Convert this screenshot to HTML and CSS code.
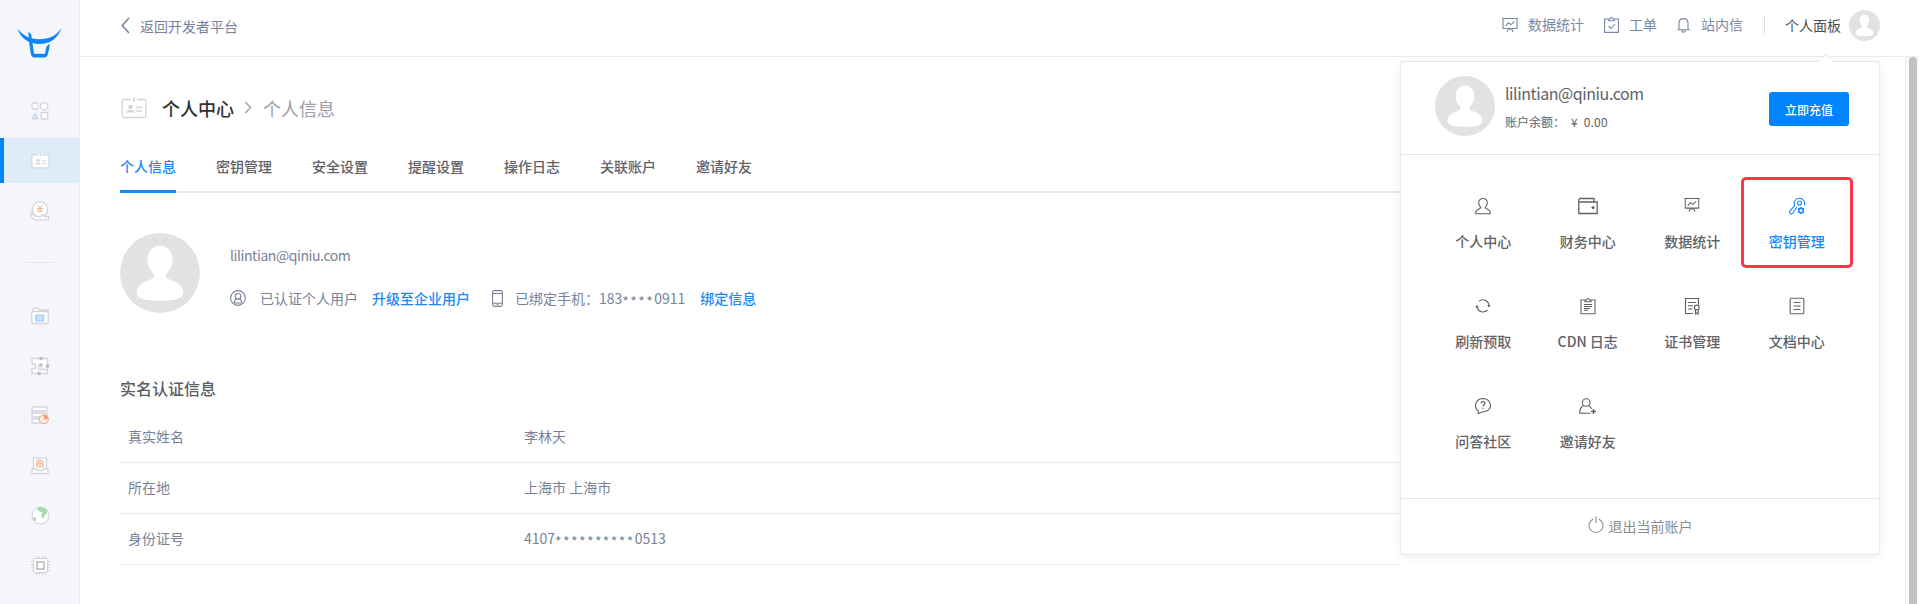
FILE: index.html
```html
<!DOCTYPE html>
<html lang="zh-CN">
<head>
<meta charset="utf-8">
<title>个人中心</title>
<link rel="stylesheet" href="styles.css">
</head>
<body>
<svg class="defs" width="0" height="0">
  <symbol id="avatar" viewBox="0 0 80 80">
    <circle cx="40" cy="40" r="40" fill="#e2e2e2"/>
    <path fill="#fff" d="M40 12.500C47 12.500 52.500 18 52.500 27C52.500 34 49 37.500 46.500 41C45 43.500 46.500 45 49 46.200C56 48.500 63.500 52.500 63.300 59.500C63 67 52 67.500 40 67.500C28 67.500 17 67 16.700 59.500C16.500 52.500 24 48.500 31 46.200C33.500 45 35 43.500 33.500 41C31 37.500 27.500 34 27.500 27C27.500 18 33 12.500 40 12.500Z"/>
  </symbol>
  <symbol id="board" viewBox="0 0 16 16">
    <path d="M0 1.500H16M1 1.500V11.500H15V1.500M3.500 8.800L6.500 5.800L9 7.600L12.500 4.500M6.500 11.500L5 15M9.500 11.500L11 15M8 11.500V13.500"/>
  </symbol>
  <symbol id="idcard" viewBox="0 0 26 22">
    <rect class="paper" x="1.200" y="2.500" width="23.600" height="18" rx="1.500"/>
    <path class="gap" d="M10 2.500H16" stroke-width="3"/>
    <path d="M13 .5V4.500" stroke-width="2"/>
    <g class="solid"><circle cx="9.500" cy="10" r="2.200"/><path d="M5.500 15.500C5.500 13 8 13 9.500 13S13.500 13 13.500 15.500Z"/></g>
    <path d="M15 10.500H21M15 14H21" stroke-width="1.400"/>
  </symbol>
</svg>

<aside class="sidebar">
  <a class="logo"><svg width="45" height="30" viewBox="0 0 46 31" preserveAspectRatio="none"><g fill="#0e86f8"><path d="M0 0C6 8 13 11.500 23 11.500S40 8 45.500 0C41.500 11 34 16.500 23 16.500S4 11 0 0Z"/><path d="M11.500 4L14.500 6.500C15.300 11 16.500 20 17.500 26.500H28.500C30 23.500 28 18.500 33.700 16.500C33 20 32.500 24 31.500 27C30.800 29.500 29.500 30.500 27 30.500H18.500C16 30.500 14.800 29.500 14.200 27C12.900 20 12 11 11.500 4Z"/></g></svg></a>
  <nav class="menu">
    <a class="item"><svg width="18" height="18" viewBox="0 0 18 18"><g class="line"><rect x="1" y="1" width="6" height="6" rx=".7"/><circle cx="13.200" cy="4.200" r="3.700"/><rect x="10.200" y="10.500" width="6.500" height="6.500" rx=".7"/></g><path d="M4.200 11.200L7.200 16.800H1.200Z" fill="#d2e6f8" stroke="#b4d4f2" stroke-linejoin="round"/></svg></a>
    <a class="item active"><svg class="line" width="19" height="16"><use href="#idcard"/></svg></a>
    <a class="item"><svg width="20" height="20" viewBox="0 0 20 20"><g class="line"><circle cx="10" cy="8.500" r="7.700"/><path d="M1.200 11.500V15C2.500 17.500 4 18.800 6 18.800H18.500V15.500H14.500L12.500 13.500L11 15.500H8C5 15.500 3 14.500 1.200 11.500Z"/></g><path d="M7.300 4L10 7L12.700 4M7 7.500H13M7 9.700H13M10 7V12.200" fill="none" stroke="#f0b597"/></svg></a>
    <span class="rule"></span>
    <a class="item"><svg width="18" height="18" viewBox="0 0 18 18"><g class="line"><path d="M.8 4.500V16.500H17.200V3H8L7 1.200H3L1.800 3V4.500H17"/></g><rect x="4.800" y="8" width="8" height="6" fill="#c7e0f7" stroke="#9cc7ef"/></svg></a>
    <a class="item"><svg width="18" height="18" viewBox="0 0 18 18"><g class="line"><path d="M1 1.500H16.500V16.500H1V11.500H4.500V7H1ZM7.500 8V12.500H16M7.500 8H10"/></g><g fill="#b9bbc1"><rect x="8.500" y="0" width="3" height="3"/><rect x="8.500" y="6.500" width="3" height="3"/><rect x="15" y="7.500" width="3" height="3"/><rect x="6.500" y="15" width="3" height="3"/></g></svg></a>
    <a class="item"><svg width="18" height="19" viewBox="0 0 18 19"><g class="line"><rect x="1" y="1" width="15" height="4" rx=".5"/><rect x="1" y="7" width="15" height="4" rx=".5"/><rect x="1" y="13" width="15" height="4" rx=".5"/></g><circle cx="12.800" cy="13.300" r="4.500" fill="#fbe9e0" stroke="#ecaa8b"/><path d="M12.800 8.800A4.500 4.500 0 0 1 17.300 13.300H12.800Z" fill="#eb9f7c"/></svg></a>
    <a class="item"><svg width="18" height="18" viewBox="0 0 18 18"><g class="line"><path d="M2.500 12V1.200H15.500V12M1 12H5.500L7 13.500H11L12.500 12H17V16.500H1Z"/></g><circle cx="8.800" cy="6.500" r="3.600" fill="#fbdfd3" stroke="#f0b597"/><path d="M6.500 7L8.500 5.500L11 7M11.300 9L13 11" fill="none" stroke="#eda98b"/></svg></a>
    <a class="item"><svg width="19" height="19" viewBox="0 0 19 19"><circle cx="9.500" cy="9.500" r="8.500" fill="#fff"/><path d="M5.500 1.800C9 .5 14 .8 16.500 4.500L15.500 8L13 9.500L12.500 13L10 10L11.500 6.500L7.500 5ZM1.200 11.500H5.200L4.700 14.500L3.300 15.500Z" fill="#a4dcae"/><circle cx="9.500" cy="9.500" r="8.500" fill="none" stroke="#cfd1d6"/></svg></a>
    <a class="item"><svg width="19" height="19" viewBox="0 0 19 19"><path d="M5.500 0V19M8.500 0V19M11.500 0V19M14.500 0V19M0 5.500H19M0 8.500H19M0 11.500H19M0 14.500H19" stroke="#cfd1d6"/><rect x="2.500" y="2.500" width="14" height="14" rx="1" fill="#fff" stroke="#cfd1d6"/><rect x="6" y="6" width="7" height="7" fill="#fff" stroke="#a9abb2" stroke-width="1.300"/></svg></a>
  </nav>
</aside>

<div class="page">
  <header class="header">
    <a class="back"><svg class="ico" width="9" height="17" viewBox="0 0 9 17"><path d="M8 1L1.200 8.500L8 16" stroke-width="1.500"/></svg><span>返回开发者平台</span></a>
    <nav class="links">
      <a class="link stats"><svg class="ico" width="16" height="16"><use href="#board"/></svg><span>数据统计</span></a>
      <a class="link tickets"><svg class="ico" width="15" height="16" viewBox="0 0 15 16"><path d="M4 2H.6V15.400H14.400V2H11M4.500 3.800V2H6C6 0 9 0 9 2H10.500V3.800ZM4.500 9L7 11.500L11 7"/></svg><span>工单</span></a>
      <a class="link inbox"><svg class="ico" width="13" height="16" viewBox="0 0 13 16"><path d="M.2 12.800H12.800M2 12.800V6.500C2 0 11 0 11 6.500V12.800M4.700 13C4.700 16 8.300 16 8.300 13"/></svg><span>站内信</span></a>
      <span class="split"></span>
      <a class="panel-link">个人面板<svg width="31" height="31"><use href="#avatar"/></svg></a>
    </nav>
  </header>

  <div class="body">
    <main class="content">
      <h1 class="crumbs"><svg class="line card" width="26" height="22"><use href="#idcard"/></svg><span class="here">个人中心</span><svg class="arrow" width="8" height="13" viewBox="0 0 8 13"><path d="M1.200 1L6.500 6.500L1.200 12" fill="none" stroke="#a0a3a9" stroke-width="1.500"/></svg><span class="sub">个人信息</span></h1>
      <nav class="tabs"><a class="tab on">个人信息</a><a class="tab">密钥管理</a><a class="tab">安全设置</a><a class="tab">提醒设置</a><a class="tab">操作日志</a><a class="tab">关联账户</a><a class="tab">邀请好友</a></nav>
      <section class="profile">
        <svg width="80" height="80"><use href="#avatar"/></svg>
        <div class="info">
          <div class="email">lilintian@qiniu.com</div>
          <div class="status">
            <svg class="ico who" width="16" height="16" viewBox="0 0 16 16"><circle cx="8" cy="8" r="7.400"/><circle cx="8" cy="6.300" r="2.800"/><path d="M6.500 8.800C4 10.500 3.800 12.500 5 13H11C12.200 12.500 12 10.500 9.500 8.800"/></svg>
            <span>已认证个人用户</span><a class="action up">升级至企业用户</a>
            <svg class="ico phone" width="11" height="17" viewBox="0 0 11 17"><rect x=".6" y=".6" width="9.800" height="15.800" rx="1.800"/><path d="M.6 3.500H10.400M.6 13.300H10.400M4.500 14.800H6.500"/></svg>
            <span>已绑定手机：183<span class="mask">****</span>0911</span><a class="action bind">绑定信息</a>
          </div>
        </div>
      </section>
      <h2 class="subhead">实名认证信息</h2>
      <dl class="facts">
        <div class="fact"><dt>真实姓名</dt><dd>李林天</dd></div>
        <div class="fact"><dt>所在地</dt><dd>上海市 上海市</dd></div>
        <div class="fact"><dt>身份证号</dt><dd>4107<span class="mask">**********</span>0513</dd></div>
      </dl>
    </main>
    <div class="scrollbar"><div class="thumb"></div></div>
  </div>
</div>

<div class="popover">
  <svg class="tip" width="14" height="8" viewBox="0 0 14 8"><path d="M0 7L7 .5L14 7V8H0Z" fill="#fff"/><path d="M0 7L7 .7L14 7" fill="none" stroke="#e6e8f2"/></svg>
  <div class="account">
    <svg width="60" height="60"><use href="#avatar"/></svg>
    <div class="who-am-i"><div class="mail">lilintian@qiniu.com</div><div class="balance">账户余额：<span class="money">¥&nbsp; 0.00</span></div></div>
    <button class="pay">立即充值</button>
  </div>
  <div class="grid">
    <a class="cell"><svg class="ico" width="20" height="18" viewBox="0 0 20 18"><path d="M10 1.500C12.500 1.500 14.300 3 14.300 6C14.300 8.500 13 9.500 12.200 10.500C12 12 17.200 12 17.200 15V16.800H2.800V15C2.800 12 8 12 7.800 10.500C7 9.500 5.700 8.500 5.700 6C5.700 3 7.500 1.500 10 1.500Z"/></svg>个人中心</a>
    <a class="cell"><svg class="ico" width="20" height="18" viewBox="0 0 20 18"><path d="M1 1.500H16V5M.8 2V16.500H19.200V5H1" stroke-width="1.300"/><circle cx="15" cy="10.500" r="1.500" class="dot"/></svg>财务中心</a>
    <a class="cell"><svg class="ico raised" width="16" height="15" viewBox="0 0 16 15.500"><use href="#board" width="16" height="16"/></svg>数据统计</a>
    <a class="cell key"><svg class="ico" width="18" height="18" viewBox="0 0 18 18"><path d="M8.800 10.300L5 15.800C3.500 18 .5 16.500 1.800 14L6.500 9C5.500 4.500 7.500 1.500 11 1.200C15 1 17.500 4.500 16.200 8.500"/><circle cx="11.500" cy="6" r="2"/><circle cx="13" cy="13.500" r="2.300" stroke-width="1.500"/><path d="M13 10V11.200M13 15.800V17M10 11.700L11 12.300M15 14.700L16 15.300M16 11.700L15 12.300M11 14.700L10 15.300" stroke-width="1.500"/></svg>密钥管理</a>
    <a class="cell"><svg class="ico" width="18" height="18" viewBox="0 0 18 18"><path d="M5 4.200A6.200 6.200 0 0 1 15 8M13.500 13A6.200 6.200 0 0 1 3 10.300"/><path class="dot" d="M13.300 8H16.800L15 10.500ZM1.200 10.500H4.800L3 7.800Z"/></svg>刷新预取</a>
    <a class="cell"><svg class="ico" width="16" height="18" viewBox="0 0 16 18"><path d="M5 3H1V16.800H15V3H11M5 4.800V3H6.500C6.500 1 9.500 1 9.500 3H11V4.800ZM4 7.500H12M4 9.500H12M4 11.500H10M4 13.300H8"/></svg>CDN 日志</a>
    <a class="cell"><svg class="ico" width="16" height="18" viewBox="0 0 16 18"><path d="M9 16.500H1.500V1.500H14.500V7.500M4 5.500H12M4 8.700H9M4 12H8.500"/><circle cx="12.800" cy="10.500" r="2.400"/><path d="M11.500 12.500V17L12.800 16L14.200 17V12.500"/></svg>证书管理</a>
    <a class="cell"><svg class="ico" width="16" height="18" viewBox="0 0 16 18"><rect x="1.200" y="1.200" width="13.600" height="15.600" rx="1"/><path d="M4.500 5.500H11.500M4.500 9H11.500M4.500 12.500H11.500"/></svg>文档中心</a>
    <a class="cell"><svg class="ico" width="18" height="18" viewBox="0 0 18 18"><path d="M4.200 16.500V13.800C0 11 .5 2 9 1.500C18.500 1.500 19.500 14.500 9 14.800Z"/><path d="M7 6.300C7 4 11 4 11 6.300C11 7.700 9 7.800 9 9.500M9 10.800V12"/></svg>问答社区</a>
    <a class="cell"><svg class="ico left" width="18" height="18" viewBox="0 0 18 18"><circle cx="8.200" cy="5.500" r="3.800"/><path d="M5.800 8.500C3 10 1.500 13 1.800 16.300H12.500M10.500 8.500C12 9.500 13 10.500 13.600 11.800"/><path d="M15.500 12V17M13 14.500H18" stroke-width="1.400"/></svg>邀请好友</a>
  </div>
  <a class="logout"><svg class="ico" width="16" height="17" viewBox="0 0 16 17"><path d="M5.300 3A7 7 0 1 0 10.700 3M8 .5V7"/></svg>退出当前账户</a>
  <div class="highlight"></div>
</div>
</body>
</html>
```
FILE: styles.css
```css
* { box-sizing: border-box; }

body {
  margin: 0;
  height: 604px;
  display: flex;
  position: relative;
  overflow: hidden;
  background: #fff;
  color: #778299;
  font: 14px/20px "Noto Sans CJK SC", "Noto Sans", sans-serif;
}

h1, h2, dl, dd { margin: 0; }
svg { display: block; flex: none; }
.defs { position: absolute; }

.ico { fill: none; stroke: currentColor; stroke-width: 1.1; }
.ico .dot { fill: currentColor; stroke: none; }
.line { fill: #fff; stroke: #d3d5da; stroke-width: 1.3; }
.solid { fill: #d3d5da; stroke: none; }
.gap { stroke: #fff; }

/* Sidebar */
.sidebar {
  width: 80px;
  flex: none;
  background: #f5f6fa;
  border-right: 1px solid #e6e8f2;
}
.logo { display: flex; height: 88px; padding: 28px 0 0 17px; }
.menu { display: flex; flex-direction: column; gap: 5px; }
.item {
  height: 45px;
  display: flex;
  align-items: center;
  justify-content: center;
  padding-left: 1px;
}
.active { background: #deecf9; border-left: 4px solid #0085ff; padding: 0 3px 0 0; }
.active svg { stroke-width: 1.7; }
.rule { width: 30px; height: 1px; background: #e4e5eb; margin: 24px auto 25px 25px; }

/* Header */
.page { flex: 1; min-width: 0; display: flex; flex-direction: column; }
.header {
  height: 57px;
  flex: none;
  display: flex;
  justify-content: space-between;
  border-bottom: 1px solid #e9eaf2;
  padding: 0 39px 0 41px;
}
.back { display: flex; align-items: center; gap: 10px; padding-bottom: 6px; height: 56px; }
.back span { padding-top: 2px; }
.links { display: flex; height: 50px; align-items: center; color: #7b88a3; }
.link { display: flex; align-items: center; gap: 10px; }
.link span { padding-bottom: 3px; }
.stats, .tickets { margin-right: 20px; }
.inbox svg { margin-right: 1px; }
.split { width: 1px; height: 18px; background: #dcdfe8; margin: 1px 20px 0 21px; }
.panel-link { display: flex; align-items: center; gap: 8px; color: #4e4e50; }

/* Main content */
.body { flex: 1; display: flex; min-height: 0; }
.content { flex: 1; padding: 38px 505px 0 40px; }
.crumbs { display: flex; align-items: center; height: 25px; font-size: 18px; font-weight: 400; }
.card { margin-left: 1px; }
.here { margin-left: 15px; color: #303133; font-weight: 500; }
.arrow { margin: 0 11px 0 10px; }
.sub { color: #9da0a6; }
.tabs {
  display: flex;
  gap: 40px;
  height: 73px;
  align-items: flex-end;
  box-shadow: inset 0 -2px #e8eaf1;
}
.tab { height: 37px; color: #5f6269; font-weight: 500; white-space: nowrap; }
.on { color: #1989fa; border-bottom: 3px solid #1989fa; }
.profile { display: flex; padding-top: 40px; gap: 30px; }
.info { padding-top: 12px; }
.email { letter-spacing: -.42px; }
.status { display: flex; align-items: center; margin-top: 23px; white-space: nowrap; }
.who { margin-right: 14px; }
.action { color: #1989fa; font-weight: 500; }
.up { margin: 0 22px 0 14px; }
.phone { margin-right: 12px; }
.bind { margin-left: 15px; }
.mask { letter-spacing: 1.42px; line-height: 0; vertical-align: -3px; }
.subhead { margin-top: 64px; font-size: 16px; line-height: 22px; font-weight: 500; color: #5b5d61; }
.facts { margin-top: 13px; }
.fact {
  display: flex;
  height: 51px;
  align-items: center;
  padding: 0 0 2px 8px;
  border-bottom: 1px solid #e9ebf4;
}
.fact dt { width: 396px; }

.scrollbar {
  width: 14px;
  flex: none;
  background: #fafafa;
  border-left: 1px solid #e8e8e8;
  padding-left: 3px;
}
.thumb { width: 8px; height: 100%; background: #c1c1c1; border-radius: 4px 4px 0 0; }

/* Account popover */
.popover {
  position: absolute;
  left: 1400px;
  top: 61px;
  width: 480px;
  height: 494px;
  background: #fff;
  border: 1px solid #e6e8f2;
  border-radius: 3px;
  box-shadow: 0 2px 8px rgba(40, 50, 80, .08);
  color: #606266;
}
.tip { position: absolute; left: 418px; top: -8px; }
.account {
  display: flex;
  align-items: center;
  height: 93px;
  border-bottom: 1px solid #e3e5ec;
  padding: 0 30px 4px 34px;
}
.who-am-i { margin: 1px 0 0 10px; flex: 1; }
.mail { font-size: 16px; line-height: 22px; letter-spacing: -.42px; }
.balance { font-size: 12px; line-height: 18px; margin-top: 9px; }
.money { margin-left: 6px; letter-spacing: .2px; }
.pay {
  width: 80px;
  height: 34px;
  margin-top: 6px;
  padding: 0;
  border: 0;
  border-radius: 3px;
  background: #0085ff;
  color: #fff;
  font: 500 12px "Noto Sans CJK SC", sans-serif;
}
.grid {
  display: grid;
  grid-template-columns: repeat(4, 104.500px);
  grid-auto-rows: 100px;
  height: 344px;
  padding: 42px 0 0 30px;
  border-bottom: 1px solid #e3e5ec;
}
.cell { display: flex; flex-direction: column; align-items: center; gap: 16px; font-weight: 500; }
.raised { margin-bottom: 3px; }
.left { margin-left: -2px; }
.key { color: #1989fa; }
.logout { display: flex; align-items: center; justify-content: center; gap: 5px; height: 54px; color: #888b92; }
.logout svg { margin-bottom: 3px; }
.highlight {
  position: absolute;
  left: 340px;
  top: 115px;
  width: 112px;
  height: 91px;
  border: 3px solid #ff3548;
  border-radius: 5px;
}
```
